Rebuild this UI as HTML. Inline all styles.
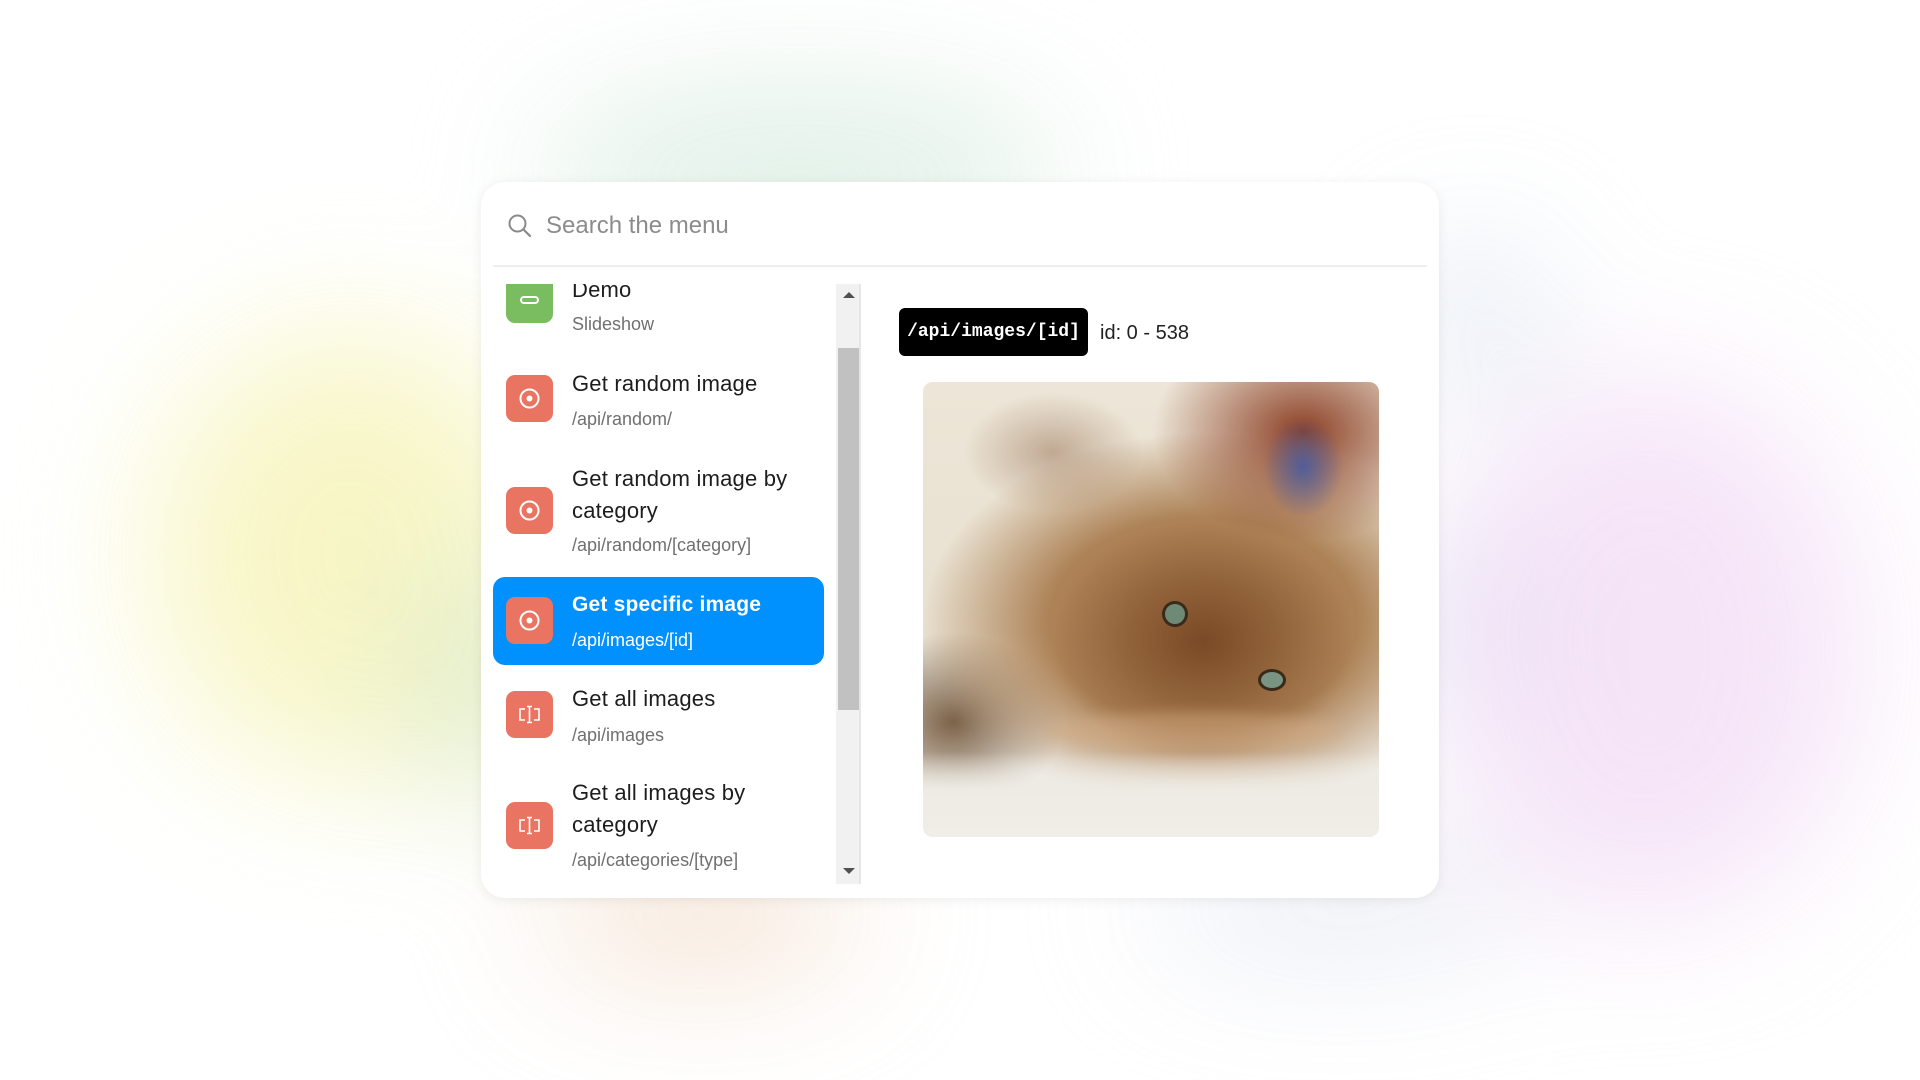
<!DOCTYPE html>
<html><head><meta charset="utf-8"><style>
html,body{margin:0;padding:0;width:1920px;height:1080px;overflow:hidden;background:#fff;font-family:"Liberation Sans",sans-serif}
.bg{position:absolute;inset:0;filter:blur(70px);opacity:.8}
.blob{position:absolute;border-radius:50%}
.card{position:absolute;left:481px;top:182px;width:958px;height:716px;background:#fff;border-radius:24px;box-shadow:0 2px 12px rgba(0,0,0,.07)}
.abs{position:absolute}
.ic{position:absolute;left:506px;width:47px;height:47px;border-radius:9px;background:#e97461}
.t{position:absolute;left:572px;font-size:22px;line-height:32px;color:#1d1d1d;letter-spacing:.2px}
.s{position:absolute;left:572px;font-size:18px;line-height:24px;color:#707070}
</style></head><body>
<div class="bg">
 <div class="blob" style="left:150px;top:330px;width:400px;height:450px;background:#f6f4b8"></div>
 <div class="blob" style="left:400px;top:560px;width:180px;height:240px;background:#dbe9bf"></div>
 <div class="blob" style="left:540px;top:100px;width:520px;height:150px;background:#d3eadc"></div>
 <div class="blob" style="left:540px;top:860px;width:320px;height:110px;background:#f1d8c2"></div>
 <div class="blob" style="left:1150px;top:860px;width:380px;height:90px;background:#dfe3ee"></div>
 <div class="blob" style="left:1420px;top:250px;width:110px;height:140px;background:#cfdcea"></div>
 <div class="blob" style="left:1440px;top:380px;width:420px;height:540px;background:#f3ddf6"></div>
 <div class="blob" style="left:1420px;top:520px;width:70px;height:200px;background:#d3cfea"></div>
</div>
<div class="card"></div>
<svg class="abs" style="left:507px;top:213px" width="26" height="26" viewBox="0 0 26 26"><circle cx="10.5" cy="10.5" r="8" fill="none" stroke="#8a8a8a" stroke-width="2"/><line x1="16.5" y1="16.5" x2="23" y2="23" stroke="#8a8a8a" stroke-width="2.2" stroke-linecap="round"/></svg>
<div class="abs" style="left:546px;top:211px;font-size:24px;line-height:30px;color:#8c8c8c">Search the menu</div>
<div class="abs" style="left:493px;top:265px;width:934px;height:2px;background:#eeeeee"></div>

<div class="abs" style="left:493px;top:577px;width:331px;height:88px;background:#0091ff;border-radius:12px"></div>

<div class="abs" style="left:493px;top:284px;width:343px;height:600px;overflow:hidden">
 <div class="ic" style="left:13px;top:-8px;background:#79bd60"><div class="abs" style="left:14px;top:20px;width:15px;height:4px;border:2px solid #fff;border-radius:5px"></div></div>
 <div class="t" style="left:79px;top:-10px">Demo</div>
</div>
<div class="s" style="top:312px">Slideshow</div>

<div class="ic" style="top:375px"><svg width="47" height="47"><circle cx="23.5" cy="23.5" r="9" fill="none" stroke="#fff" stroke-width="2"/><circle cx="23.5" cy="23.5" r="3" fill="#fff"/></svg></div>
<div class="t" style="top:368px">Get random image</div>
<div class="s" style="top:407px">/api/random/</div>

<div class="ic" style="top:487px"><svg width="47" height="47"><circle cx="23.5" cy="23.5" r="9" fill="none" stroke="#fff" stroke-width="2"/><circle cx="23.5" cy="23.5" r="3" fill="#fff"/></svg></div>
<div class="t" style="top:463px">Get random image by<br>category</div>
<div class="s" style="top:533px">/api/random/[category]</div>

<div class="ic" style="top:597px"><svg width="47" height="47"><circle cx="23.5" cy="23.5" r="9" fill="none" stroke="#fff" stroke-width="2"/><circle cx="23.5" cy="23.5" r="3" fill="#fff"/></svg></div>
<div class="t" style="top:589px;color:#fff;font-weight:bold;font-size:21px">Get specific image</div>
<div class="s" style="top:628px;color:#fff">/api/images/[id]</div>

<div class="ic" style="top:691px"><svg width="47" height="47" fill="none" stroke="#fff" stroke-width="1.6"><path d="M19 18h-5v11h5M28 18h5v11h-5M21 15.5h5M21 31.5h5M23.5 15.5v16"/></svg></div>
<div class="t" style="top:683px">Get all images</div>
<div class="s" style="top:723px">/api/images</div>

<div class="ic" style="top:802px"><svg width="47" height="47" fill="none" stroke="#fff" stroke-width="1.6"><path d="M19 18h-5v11h5M28 18h5v11h-5M21 15.5h5M21 31.5h5M23.5 15.5v16"/></svg></div>
<div class="t" style="top:777px">Get all images by<br>category</div>
<div class="s" style="top:848px">/api/categories/[type]</div>

<div class="abs" style="left:836px;top:284px;width:25px;height:600px;background:#f1f1f1;border-right:2px solid #e6e6e6;box-sizing:border-box"></div>
<div class="abs" style="left:838px;top:348px;width:21px;height:362px;background:#c1c1c1"></div>
<div class="abs" style="left:843px;top:292px;width:0;height:0;border-left:6px solid transparent;border-right:6px solid transparent;border-bottom:6px solid #505050"></div>
<div class="abs" style="left:843px;top:868px;width:0;height:0;border-left:6px solid transparent;border-right:6px solid transparent;border-top:6px solid #505050"></div>

<div class="abs" style="left:899px;top:308px;width:189px;height:48px;background:#000;border-radius:6px;color:#fff;font-family:'Liberation Mono',monospace;font-size:18px;font-weight:bold;line-height:48px;text-align:center">/api/images/[id]</div>
<div class="abs" style="left:1100px;top:320px;font-size:20px;line-height:26px;color:#222">id: 0 - 538</div>

<div class="abs" style="left:923px;top:382px;width:456px;height:455px;border-radius:10px;overflow:hidden;background:#ece6da">
 <div class="abs" style="left:0;top:0;width:456px;height:455px;background:
 radial-gradient(ellipse 40px 50px at 380px 85px,rgba(60,90,170,.8) 0%,rgba(60,90,170,0) 100%),
 radial-gradient(ellipse 150px 110px at 380px 50px,#8c3f24 0%,rgba(150,70,40,0) 100%),
 radial-gradient(ellipse 90px 60px at 130px 70px,rgba(150,110,80,.5) 0%,rgba(150,110,80,0) 100%),
 radial-gradient(ellipse 150px 120px at 280px 260px,#7a4a26 0%,rgba(122,74,38,0) 100%),
 radial-gradient(ellipse 280px 190px at 280px 240px,#a5764a 0%,#ad8256 55%,rgba(190,160,120,0) 100%),
 radial-gradient(ellipse 110px 90px at 30px 340px,#7c6248 0%,rgba(124,98,72,0) 100%),
 linear-gradient(180deg,#ede6d8 0%,#e8e0d0 55%,#ece9e2 75%,#f1efea 100%)"></div>
 <div class="abs" style="left:0;top:370px;width:456px;height:85px;background:linear-gradient(180deg,rgba(236,233,226,0),#eeebe4 45%,#f0eee8)"></div>
 <div class="abs" style="left:120px;top:330px;width:300px;height:40px;border-radius:50%;background:rgba(210,170,130,.5);filter:blur(6px)"></div>
 <div class="abs" style="left:242px;top:222px;width:20px;height:20px;border-radius:50%;background:#6e8a76;box-shadow:0 0 0 3px #3a2a1a"></div>
 <div class="abs" style="left:338px;top:290px;width:22px;height:16px;border-radius:50%;background:#7a9482;box-shadow:0 0 0 3px #3a2a1a"></div>
</div>
</body></html>
